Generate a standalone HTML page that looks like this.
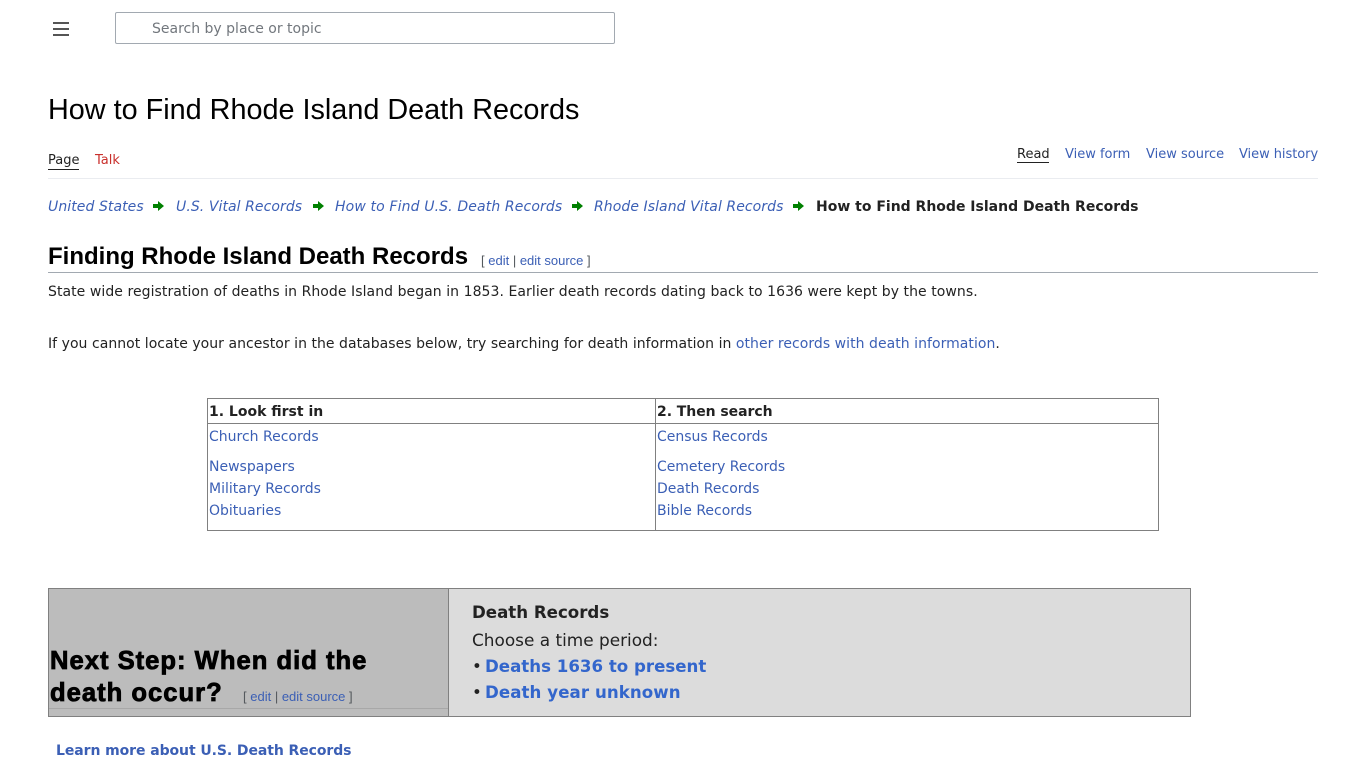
<!DOCTYPE html>
<html lang="en"><head><meta charset="utf-8"><title>How to Find Rhode Island Death Records</title>
<style>
html,body{margin:0;padding:0;background:#fff;width:1366px;height:768px;overflow:hidden}
body{font-family:"DejaVu Sans",sans-serif;font-size:14px;color:#222;position:relative}
a{color:#3b5fb5;text-decoration:none}
.t{position:absolute;white-space:nowrap}
.h{font-family:"Liberation Sans",sans-serif;color:#000}
.ed{font-family:"Liberation Sans",sans-serif;font-size:13px;color:#54595d;font-weight:400;-webkit-text-stroke:0;letter-spacing:0}
.box{position:absolute;box-sizing:border-box}
.i{font-style:italic;letter-spacing:.07px}
</style></head><body>
<svg class="box" style="left:53px;top:22px" width="16" height="14" viewBox="0 0 16 14"><path d="M0 1H16M0 7H16M0 13H16" stroke="#555" stroke-width="2" fill="none"/></svg>
<div class="box" style="left:115px;top:12px;width:500px;height:32px;border:1px solid #a2a9b1;border-radius:2px"></div>
<div class="t" style="left:152px;top:21px;color:#72777d;line-height:17px">Search by place or topic</div>

<div class="t h" style="left:48px;top:93px;font-size:28.8px;line-height:34px">How to Find Rhode Island Death Records</div>

<div class="t" style="left:48px;top:152px;font-size:13px;line-height:17px;color:#222">Page</div>
<div class="box" style="left:48px;top:169px;width:31px;height:1px;background:#222"></div>
<div class="t" style="left:95px;top:152px;font-size:13px;line-height:17px;color:#c9302c">Talk</div>
<div class="t" style="left:1017px;top:146px;font-size:13px;line-height:17px;color:#222">Read</div>
<div class="box" style="left:1017px;top:162px;width:32px;height:1px;background:#222"></div>
<a class="t" style="left:1065px;top:146px;font-size:13px;line-height:17px">View form</a>
<a class="t" style="left:1146px;top:146px;font-size:13px;line-height:17px">View source</a>
<a class="t" style="left:1239px;top:146px;font-size:13px;line-height:17px;letter-spacing:-.05px">View history</a>
<div class="box" style="left:48px;top:178px;width:1270px;height:1px;background:#eaecf0"></div>

<a class="t i" style="left:48px;top:199px;line-height:17px">United States</a>
<svg class="box" style="left:153px;top:201px" width="11" height="10" viewBox="0 0 11 10"><path d="M0 3H5V0L11 5L5 10V7H0Z" fill="#008000"/></svg>
<a class="t i" style="left:176px;top:199px;line-height:17px">U.S. Vital Records</a>
<svg class="box" style="left:313px;top:201px" width="11" height="10" viewBox="0 0 11 10"><path d="M0 3H5V0L11 5L5 10V7H0Z" fill="#008000"/></svg>
<a class="t i" style="left:335px;top:199px;line-height:17px;letter-spacing:.13px">How to Find U.S. Death Records</a>
<svg class="box" style="left:572px;top:201px" width="11" height="10" viewBox="0 0 11 10"><path d="M0 3H5V0L11 5L5 10V7H0Z" fill="#008000"/></svg>
<a class="t i" style="left:594px;top:199px;line-height:17px">Rhode Island Vital Records</a>
<svg class="box" style="left:793px;top:201px" width="11" height="10" viewBox="0 0 11 10"><path d="M0 3H5V0L11 5L5 10V7H0Z" fill="#008000"/></svg>
<div class="t" style="left:816px;top:199px;font-weight:700;line-height:17px">How to Find Rhode Island Death Records</div>

<div class="t h" style="left:48px;top:242px;font-size:24px;font-weight:700;line-height:29px">Finding Rhode Island Death Records</div>
<div class="t ed" style="left:481px;top:252px;line-height:17px">[ <a href="#">edit</a> | <a href="#">edit source</a> ]</div>
<div class="box" style="left:48px;top:272px;width:1270px;height:1px;background:#a2a9b1"></div>

<div class="t" style="left:48px;top:284px;line-height:17px;letter-spacing:.06px">State wide registration of deaths in Rhode Island began in 1853. Earlier death records dating back to 1636 were kept by the towns.</div>
<div class="t" style="left:48px;top:336px;line-height:17px;letter-spacing:.04px">If you cannot locate your ancestor in the databases below, try searching for death information in <a href="#">other records with death information</a>.</div>

<div class="box" style="left:207px;top:398px;width:952px;height:133px;border:1px solid #808080"></div>
<div class="box" style="left:207px;top:423px;width:952px;height:1px;background:#808080"></div>
<div class="box" style="left:655px;top:398px;width:1px;height:133px;background:#808080"></div>
<div class="t" style="left:209px;top:404px;font-weight:700;line-height:17px">1. Look first in</div>
<div class="t" style="left:657px;top:404px;font-weight:700;line-height:17px;letter-spacing:-.05px">2. Then search</div>
<a class="t" style="left:209px;top:429px;line-height:17px">Church Records</a>
<a class="t" style="left:209px;top:459px;line-height:17px">Newspapers</a>
<a class="t" style="left:209px;top:481px;line-height:17px">Military Records</a>
<a class="t" style="left:209px;top:503px;line-height:17px">Obituaries</a>
<a class="t" style="left:657px;top:429px;line-height:17px">Census Records</a>
<a class="t" style="left:657px;top:459px;line-height:17px;letter-spacing:-.05px">Cemetery Records</a>
<a class="t" style="left:657px;top:481px;line-height:17px">Death Records</a>
<a class="t" style="left:657px;top:503px;line-height:17px">Bible Records</a>

<div class="box" style="left:48px;top:588px;width:1143px;height:129px;background:#dcdcdc;border:1px solid #808080"></div>
<div class="box" style="left:49px;top:589px;width:400px;height:127px;background:#bcbcbc;border-right:1px solid #808080"></div>
<div class="box" style="left:49px;top:708px;width:399px;height:1px;background:#a8a8a8"></div>
<div class="t h" style="left:50px;top:645px;font-size:25.6px;font-weight:700;line-height:32px;letter-spacing:1px;-webkit-text-stroke:.8px #000">Next Step: When did the<br>death occur?</div>
<div class="t ed" style="left:243px;top:688px;line-height:17px">[ <a href="#">edit</a> | <a href="#">edit source</a> ]</div>

<div class="t" style="left:472px;top:603px;font-size:16.64px;font-weight:700;line-height:20px">Death Records</div>
<div class="t" style="left:472px;top:630px;font-size:16.9px;line-height:20px">Choose a time period:</div>
<div class="t" style="left:472px;top:657px;font-size:16.64px;line-height:20px"><span style="font-size:16.64px">•</span><a href="#" style="font-weight:700;color:#3366cc;position:absolute;left:13px;top:0">Deaths 1636 to present</a></div>
<div class="t" style="left:472px;top:683px;font-size:16.64px;line-height:20px"><span style="font-size:16.64px">•</span><a href="#" style="font-weight:700;color:#3366cc;position:absolute;left:13px;top:0;letter-spacing:.07px">Death year unknown</a></div>

<a class="t" style="left:56px;top:743px;font-weight:700;line-height:17px;letter-spacing:-.08px">Learn more about U.S. Death Records</a>
</body></html>
